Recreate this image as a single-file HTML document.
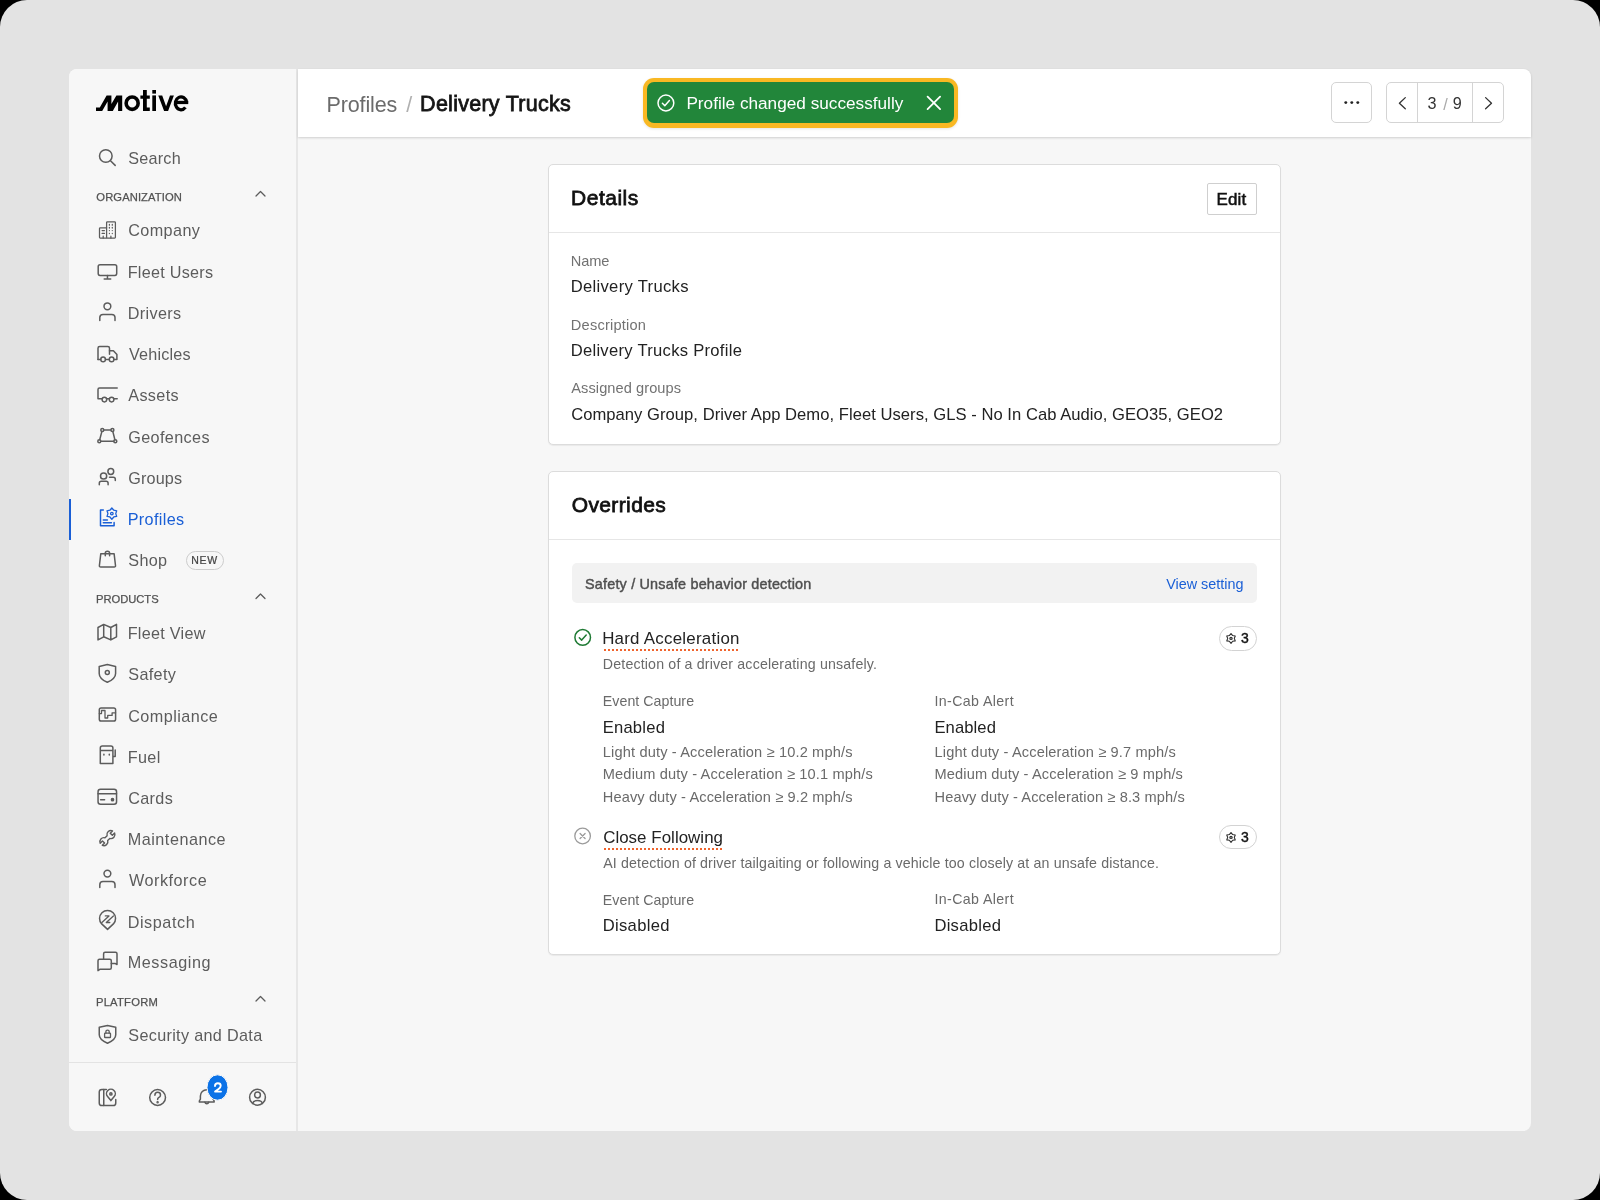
<!DOCTYPE html>
<html><head><meta charset="utf-8">
<style>
html,body{margin:0;padding:0;width:1600px;height:1200px;overflow:hidden;background:#000;}
body{position:relative;font-family:"Liberation Sans",sans-serif;}
.a{position:absolute;box-sizing:border-box;}
.t{position:absolute;white-space:pre;font-family:"Liberation Sans",sans-serif;}
#screen{left:0;top:0;width:1600px;height:1200px;border-radius:27px;background:#e3e3e3;}
#win{left:69px;top:69px;width:1462px;height:1062px;border-radius:8px;background:#f7f7f7;overflow:hidden;}
#side{left:69px;top:69px;width:229px;height:1062px;border-radius:8px 0 0 8px;background:#f7f7f7;border-right:2px solid #e7e7e7;}
#sidediv{left:69px;top:1062px;width:227px;height:1px;background:#e3e3e3;}
#active{left:69px;top:498.5px;width:2px;height:41px;background:#1a5fd6;}
#hdr{left:298px;top:69px;width:1233px;height:68px;background:#fff;border-radius:0 8px 0 0;box-shadow:0 1px 2.5px rgba(0,0,0,0.16);}
#toastO{left:643px;top:78px;width:315px;height:49.5px;border-radius:11px;background:#f9b823;box-shadow:0 1px 3px rgba(0,0,0,0.10);}
#toastI{left:647px;top:82px;width:307px;height:41px;border-radius:7px;background:#22863a;}
.btn{border:1px solid #d4d4d4;border-radius:5px;background:#fff;}
#dots{left:1331px;top:82px;width:41px;height:41px;}
#pager{left:1386px;top:82px;width:118px;height:41px;}
.vdiv{width:1px;background:#d4d4d4;}
.card{background:#fff;border:1px solid #dcdcdc;border-radius:5px;box-shadow:0 1px 1px rgba(0,0,0,0.06);}
#card1{left:548px;top:163.5px;width:733px;height:281px;}
#card2{left:548px;top:470.5px;width:733px;height:484.5px;}
.hdiv{height:1px;background:#e6e6e6;}
#edit{left:1207px;top:183px;width:50px;height:32px;border:1px solid #cfcfcf;border-radius:2px;background:#fff;}
#bar{left:571.5px;top:562.5px;width:685.5px;height:40.5px;border-radius:5px;background:#f2f2f2;}
.pill{border:1px solid #d3d3d3;border-radius:13px;background:#fff;}
#newpill{left:186px;top:550.5px;width:37.5px;height:19.5px;border:1px solid #cdcdcd;border-radius:10px;}
.dotu{height:2px;background-image:linear-gradient(to right,#f0642d 0,#f0642d 2px,transparent 2px);background-size:4px 2px;background-repeat:repeat-x;}
svg{position:absolute;left:0;top:0;overflow:visible;}
</style></head><body>
<div class="a" id="screen"></div>
<div class="a" id="win"></div>
<div class="a" id="side"></div>
<div class="a" id="sidediv"></div>
<div class="a" id="active"></div>
<div class="a" id="hdr"></div>
<div class="a" id="toastO"></div>
<div class="a" id="toastI"></div>
<div class="a btn" id="dots"></div>
<div class="a btn" id="pager"></div>
<div class="a vdiv" style="left:1417px;top:83px;height:39px;"></div>
<div class="a vdiv" style="left:1472px;top:83px;height:39px;"></div>
<div class="a card" id="card1"></div>
<div class="a hdiv" style="left:549px;top:232px;width:731px;"></div>
<div class="a" id="edit"></div>
<div class="a card" id="card2"></div>
<div class="a hdiv" style="left:549px;top:538.5px;width:731px;"></div>
<div class="a" id="bar"></div>
<div class="a pill" style="left:1219px;top:626px;width:38px;height:25px;"></div>
<div class="a pill" style="left:1219px;top:825px;width:38px;height:24px;"></div>
<div class="a" id="newpill"></div>
<div class="a dotu" style="left:604px;top:649px;width:135px;"></div>
<div class="a dotu" style="left:604px;top:847.5px;width:119px;"></div>

<div id="texts" style="position:absolute;left:0;top:0;width:1600px;height:1200px;will-change:transform;">
<div class="t" style="left:128.27px;top:148px;font-size:16.2px;line-height:21px;color:#5c5c5c;font-weight:400;letter-spacing:0.218px;">Search</div>
<div class="t" style="left:128.19px;top:220px;font-size:16.2px;line-height:21px;color:#5c5c5c;font-weight:400;letter-spacing:0.406px;">Company</div>
<div class="t" style="left:127.66px;top:262px;font-size:16.2px;line-height:21px;color:#5c5c5c;font-weight:400;letter-spacing:0.262px;">Fleet Users</div>
<div class="t" style="left:127.66px;top:303px;font-size:16.2px;line-height:21px;color:#5c5c5c;font-weight:400;letter-spacing:0.375px;">Drivers</div>
<div class="t" style="left:128.92px;top:344px;font-size:16.2px;line-height:21px;color:#5c5c5c;font-weight:400;letter-spacing:0.209px;">Vehicles</div>
<div class="t" style="left:128.26px;top:385px;font-size:16.2px;line-height:21px;color:#5c5c5c;font-weight:400;letter-spacing:0.362px;">Assets</div>
<div class="t" style="left:128.19px;top:427px;font-size:16.2px;line-height:21px;color:#5c5c5c;font-weight:400;letter-spacing:0.381px;">Geofences</div>
<div class="t" style="left:128.19px;top:468px;font-size:16.2px;line-height:21px;color:#5c5c5c;font-weight:400;letter-spacing:0.172px;">Groups</div>
<div class="t" style="left:127.66px;top:509px;font-size:16.2px;line-height:21px;color:#1a5fd6;font-weight:400;letter-spacing:0.351px;">Profiles</div>
<div class="t" style="left:128.27px;top:550px;font-size:16.2px;line-height:21px;color:#5c5c5c;font-weight:400;letter-spacing:0.350px;">Shop</div>
<div class="t" style="left:127.66px;top:623px;font-size:16.2px;line-height:21px;color:#5c5c5c;font-weight:400;letter-spacing:0.274px;">Fleet View</div>
<div class="t" style="left:128.27px;top:664px;font-size:16.2px;line-height:21px;color:#5c5c5c;font-weight:400;letter-spacing:0.352px;">Safety</div>
<div class="t" style="left:128.19px;top:706px;font-size:16.2px;line-height:21px;color:#5c5c5c;font-weight:400;letter-spacing:0.468px;">Compliance</div>
<div class="t" style="left:127.66px;top:747px;font-size:16.2px;line-height:21px;color:#5c5c5c;font-weight:400;letter-spacing:0.390px;">Fuel</div>
<div class="t" style="left:128.19px;top:788px;font-size:16.2px;line-height:21px;color:#5c5c5c;font-weight:400;letter-spacing:0.353px;">Cards</div>
<div class="t" style="left:127.66px;top:829px;font-size:16.2px;line-height:21px;color:#5c5c5c;font-weight:400;letter-spacing:0.528px;">Maintenance</div>
<div class="t" style="left:128.92px;top:870px;font-size:16.2px;line-height:21px;color:#5c5c5c;font-weight:400;letter-spacing:0.533px;">Workforce</div>
<div class="t" style="left:127.66px;top:912px;font-size:16.2px;line-height:21px;color:#5c5c5c;font-weight:400;letter-spacing:0.583px;">Dispatch</div>
<div class="t" style="left:127.66px;top:952px;font-size:16.2px;line-height:21px;color:#5c5c5c;font-weight:400;letter-spacing:0.575px;">Messaging</div>
<div class="t" style="left:128.27px;top:1025px;font-size:16.2px;line-height:21px;color:#5c5c5c;font-weight:400;letter-spacing:0.327px;">Security and Data</div>
<div class="t" style="left:96.32px;top:190px;font-size:11.2px;line-height:14px;color:#525252;font-weight:400;letter-spacing:0.112px;-webkit-text-stroke:0.25px #525252;">ORGANIZATION</div>
<div class="t" style="left:95.93px;top:592px;font-size:11.2px;line-height:14px;color:#525252;font-weight:400;letter-spacing:-0.007px;-webkit-text-stroke:0.25px #525252;">PRODUCTS</div>
<div class="t" style="left:95.93px;top:995px;font-size:11.2px;line-height:14px;color:#525252;font-weight:400;letter-spacing:0.258px;-webkit-text-stroke:0.25px #525252;">PLATFORM</div>
<div class="t" style="left:191.23px;top:553px;font-size:10.5px;line-height:14px;color:#444;font-weight:400;letter-spacing:0.746px;-webkit-text-stroke:0.23px #444;">NEW</div>
<div class="t" style="left:326.55px;top:92px;font-size:21.5px;line-height:27px;color:#6b6b6b;font-weight:400;letter-spacing:-0.139px;">Profiles</div>
<div class="t" style="left:406.30px;top:92px;font-size:21.5px;line-height:27px;color:#b0b0b0;font-weight:400;letter-spacing:0.000px;">/</div>
<div class="t" style="left:420.11px;top:91px;font-size:21.5px;line-height:27px;color:#151515;font-weight:400;letter-spacing:0.264px;-webkit-text-stroke:0.77px #151515;">Delivery Trucks</div>
<div class="t" style="left:686.40px;top:92px;font-size:17.2px;line-height:22px;color:#ffffff;font-weight:400;letter-spacing:0.002px;">Profile changed successfully</div>
<div class="t" style="left:1427.39px;top:93px;font-size:16.2px;line-height:21px;color:#333;font-weight:400;letter-spacing:0.000px;">3</div>
<div class="t" style="left:1443.24px;top:94px;font-size:16.2px;line-height:21px;color:#aaa;font-weight:400;letter-spacing:0.000px;">/</div>
<div class="t" style="left:1452.74px;top:93px;font-size:16.2px;line-height:21px;color:#333;font-weight:400;letter-spacing:0.000px;">9</div>
<div class="t" style="left:571.07px;top:184px;font-size:21px;line-height:27px;color:#111;font-weight:400;letter-spacing:0.493px;-webkit-text-stroke:0.76px #111;">Details</div>
<div class="t" style="left:1216.45px;top:189px;font-size:17px;line-height:22px;color:#111;font-weight:400;letter-spacing:0.166px;-webkit-text-stroke:0.51px #111;">Edit</div>
<div class="t" style="left:570.80px;top:252px;font-size:14.6px;line-height:19px;color:#727272;font-weight:400;letter-spacing:-0.123px;">Name</div>
<div class="t" style="left:570.63px;top:276px;font-size:16.6px;line-height:21px;color:#222;font-weight:400;letter-spacing:0.321px;">Delivery Trucks</div>
<div class="t" style="left:570.80px;top:316px;font-size:14.6px;line-height:19px;color:#727272;font-weight:400;letter-spacing:0.212px;">Description</div>
<div class="t" style="left:570.63px;top:340px;font-size:16.6px;line-height:21px;color:#222;font-weight:400;letter-spacing:0.284px;">Delivery Trucks Profile</div>
<div class="t" style="left:571.26px;top:379px;font-size:14.6px;line-height:19px;color:#727272;font-weight:400;letter-spacing:0.077px;">Assigned groups</div>
<div class="t" style="left:571.17px;top:404px;font-size:16.6px;line-height:21px;color:#222;font-weight:400;letter-spacing:0.034px;">Company Group, Driver App Demo, Fleet Users, GLS - No In Cab Audio, GEO35, GEO2</div>
<div class="t" style="left:571.70px;top:491px;font-size:21px;line-height:27px;color:#111;font-weight:400;letter-spacing:0.387px;-webkit-text-stroke:0.76px #111;">Overrides</div>
<div class="t" style="left:585.09px;top:575px;font-size:14.4px;line-height:18px;color:#4f4f4f;font-weight:400;letter-spacing:0.186px;-webkit-text-stroke:0.43px #4f4f4f;">Safety / Unsafe behavior detection</div>
<div class="t" style="left:1166.25px;top:575px;font-size:14.4px;line-height:18px;color:#1a5fd6;font-weight:400;letter-spacing:-0.014px;">View setting</div>
<div class="t" style="left:602.17px;top:628px;font-size:16.9px;line-height:22px;color:#222;font-weight:400;letter-spacing:0.249px;">Hard Acceleration</div>
<div class="t" style="left:602.83px;top:655px;font-size:14.2px;line-height:18px;color:#6a6a6a;font-weight:400;letter-spacing:0.163px;">Detection of a driver accelerating unsafely.</div>
<div class="t" style="left:1240.91px;top:629px;font-size:14px;line-height:18px;color:#111;font-weight:400;letter-spacing:0.000px;-webkit-text-stroke:0.42px #111;">3</div>
<div class="t" style="left:602.83px;top:692px;font-size:14.2px;line-height:18px;color:#6a6a6a;font-weight:400;letter-spacing:0.042px;">Event Capture</div>
<div class="t" style="left:934.51px;top:692px;font-size:14.2px;line-height:18px;color:#6a6a6a;font-weight:400;letter-spacing:0.380px;">In-Cab Alert</div>
<div class="t" style="left:602.63px;top:717px;font-size:16.6px;line-height:21px;color:#222;font-weight:400;letter-spacing:0.241px;">Enabled</div>
<div class="t" style="left:934.39px;top:717px;font-size:16.6px;line-height:21px;color:#222;font-weight:400;letter-spacing:0.107px;">Enabled</div>
<div class="t" style="left:602.80px;top:743px;font-size:14.6px;line-height:19px;color:#6a6a6a;font-weight:400;letter-spacing:0.151px;">Light duty - Acceleration ≥ 10.2 mph/s</div>
<div class="t" style="left:934.56px;top:743px;font-size:14.6px;line-height:19px;color:#6a6a6a;font-weight:400;letter-spacing:0.145px;">Light duty - Acceleration ≥ 9.7 mph/s</div>
<div class="t" style="left:602.80px;top:765px;font-size:14.6px;line-height:19px;color:#6a6a6a;font-weight:400;letter-spacing:0.151px;">Medium duty - Acceleration ≥ 10.1 mph/s</div>
<div class="t" style="left:934.56px;top:765px;font-size:14.6px;line-height:19px;color:#6a6a6a;font-weight:400;letter-spacing:0.123px;">Medium duty - Acceleration ≥ 9 mph/s</div>
<div class="t" style="left:602.80px;top:788px;font-size:14.6px;line-height:19px;color:#6a6a6a;font-weight:400;letter-spacing:0.112px;">Heavy duty - Acceleration ≥ 9.2 mph/s</div>
<div class="t" style="left:934.56px;top:788px;font-size:14.6px;line-height:19px;color:#6a6a6a;font-weight:400;letter-spacing:0.125px;">Heavy duty - Acceleration ≥ 8.3 mph/s</div>
<div class="t" style="left:603.15px;top:827px;font-size:16.9px;line-height:22px;color:#222;font-weight:400;letter-spacing:0.045px;">Close Following</div>
<div class="t" style="left:603.26px;top:854px;font-size:14.2px;line-height:18px;color:#6a6a6a;font-weight:400;letter-spacing:0.136px;">AI detection of driver tailgaiting or following a vehicle too closely at an unsafe distance.</div>
<div class="t" style="left:1240.91px;top:828px;font-size:14px;line-height:18px;color:#111;font-weight:400;letter-spacing:0.000px;-webkit-text-stroke:0.42px #111;">3</div>
<div class="t" style="left:602.83px;top:891px;font-size:14.2px;line-height:18px;color:#6a6a6a;font-weight:400;letter-spacing:0.042px;">Event Capture</div>
<div class="t" style="left:934.51px;top:890px;font-size:14.2px;line-height:18px;color:#6a6a6a;font-weight:400;letter-spacing:0.380px;">In-Cab Alert</div>
<div class="t" style="left:602.63px;top:915px;font-size:16.6px;line-height:21px;color:#222;font-weight:400;letter-spacing:0.333px;">Disabled</div>
<div class="t" style="left:934.39px;top:915px;font-size:16.6px;line-height:21px;color:#222;font-weight:400;letter-spacing:0.285px;">Disabled</div>
</div>

<svg width="1600" height="1200" viewBox="0 0 1600 1200">
<!-- logo -->
<g fill="#000">
<path d="M96 111 L96 107.6 L99.8 107.6 L106.6 95.4 L111.4 95.4 L111.4 104 L116.4 95.4 L122.2 95.4 L122.2 111 L118.1 111 L118.1 101.6 L112.8 111 L107.6 111 L107.6 101.6 L102.2 111 Z"/>
<ellipse cx="132.15" cy="103.2" rx="6" ry="6.2" fill="none" stroke="#000" stroke-width="3.6"/>
<path d="M143 90 H146.8 V95.4 H149.8 V98.8 H146.8 V107.6 H149.8 V111 H143 V98.8 H140.4 V95.4 H143 Z"/>
<rect x="152.3" y="90" width="3.7" height="3.6"/>
<rect x="152.3" y="95.4" width="3.7" height="15.6"/>
<path d="M158.25 95.4 H162.2 L166.1 106.3 L170 95.4 H173.9 L168.1 111 H164.1 Z"/>
<rect x="175" y="100.8" width="13.25" height="3.3"/>
<path d="M186.6 102.4 A5.65 6.45 0 1 0 185.4 107.4" fill="none" stroke="#000" stroke-width="3.3"/>
</g>

<g fill="none" stroke="#5c5c5c" stroke-width="1.5" stroke-linecap="round" stroke-linejoin="round">
<!-- search -->
<circle cx="105.8" cy="156" r="6.3"/>
<path d="M110.5 160.7 L115.2 165.4"/>
<!-- company -->
<g stroke-width="1.25">
<rect x="106.6" y="221.8" width="8.8" height="16.2" rx="0.8"/>
<path d="M106.6 227.8 H100.3 Q99.5 227.8 99.5 228.6 V237.2 Q99.5 238 100.3 238 H106.6"/>
<path d="M102.1 230.5 H104.4 M102.1 233.4 H104.4 M103.2 236.2 V238 M110.9 236.2 V238"/>
<path d="M109.4 224.4 V225.2 M112.3 224.4 V225.2 M109.4 227.3 V228 M112.3 227.3 V228 M109.4 230.5 V230.6 M112.3 230.5 V230.6 M109.4 233.4 V233.5 M112.3 233.4 V233.5"/>
</g>
<!-- monitor -->
<rect x="98.2" y="264.8" width="18.5" height="10.6" rx="1.8"/>
<path d="M107.45 275.4 V279 M104.2 279 H110.7"/>
<!-- drivers -->
<circle cx="107.4" cy="306.3" r="3.4"/>
<path d="M99.8 320.4 V317.6 Q99.8 314.4 103 314.4 H111.8 Q115 314.4 115 317.6 V320.4"/>
<!-- vehicles -->
<path d="M98 359.5 V348.3 Q98 346.6 99.7 346.6 H107.8 Q109.5 346.6 109.5 348.3 V354.2"/>
<path d="M109.5 350.8 H113.4 L116.9 354.6 V359.5 H114.2 M109 359.5 H105.6 M100.6 359.5 H98"/>
<circle cx="103.1" cy="359.4" r="2.3"/>
<circle cx="111.6" cy="359.4" r="2.3"/>
<!-- assets -->
<path d="M117.2 387.9 H99.5 Q98 387.9 98 389.4 V398.8 H101.9 M106.8 398.8 H109.2 M114 398.8 H117.2"/>
<circle cx="104.4" cy="399.6" r="2.3"/>
<circle cx="111.6" cy="399.6" r="2.3"/>
<!-- geofences -->
<path d="M103.8 429.9 H110.9 M112.8 431.4 L114.9 439.8 M113.8 441.3 H100.8 M99.7 439.8 L101.9 431.4"/>
<circle cx="102.3" cy="429.9" r="1.5"/>
<circle cx="112.4" cy="429.9" r="1.5"/>
<circle cx="99.3" cy="441.3" r="1.5"/>
<circle cx="115.3" cy="441.3" r="1.5"/>
<!-- groups -->
<circle cx="110.8" cy="471.5" r="2.9"/>
<path d="M109.5 477.3 H113.3 Q115.3 477.3 115.3 479.3 V480.5"/>
<circle cx="103.6" cy="476" r="3.1"/>
<path d="M99.3 484.8 V483.3 Q99.3 481.3 101.3 481.3 H106.1 Q108.1 481.3 108.1 483.3 V484.8"/>
<!-- profiles (blue) -->
<g stroke="#1a5fd6">
<path d="M103.3 510.1 H100.5 V525.7 H114.1 V522.5"/>
<path d="M103.3 520 H107.4 M103.3 522.8 H111.4"/>
<path d="M111.85 508.00 L113.80 510.22 L116.70 510.80 L115.75 513.60 L116.70 516.40 L113.80 516.98 L111.85 519.20 L109.90 516.98 L107.00 516.40 L107.95 513.60 L107.00 510.80 L109.90 510.22 Z" stroke-width="1.3"/>
<circle cx="111.85" cy="513.6" r="1.3" stroke-width="1.3"/>
</g>
<!-- shop -->
<path d="M100.8 553.7 H114.1 L115.5 565.5 Q115.7 567 114.2 567 H100.7 Q99.2 567 99.4 565.5 Z"/>
<path d="M105.3 555.7 V553 Q105.3 551.2 107.45 551.2 Q109.6 551.2 109.6 553 V555.7"/>
<!-- fleet view -->
<path d="M98 627.5 L103.7 624.4 L110.8 627.5 L116.5 624.4 V636.8 L110.8 639.9 L103.7 636.8 L98 639.9 Z M103.7 624.4 V636.8 M110.8 627.5 V639.9"/>
<!-- safety -->
<path d="M107.3 664.6 L115.6 666.4 V673.4 Q115.6 678.6 107.3 682.3 Q99.2 678.6 99.2 673.4 V666.4 Z"/>
<circle cx="107.3" cy="672.6" r="2"/>
<!-- compliance -->
<rect x="99.3" y="707.9" width="16.3" height="13.2" rx="1.8"/>
<path d="M99.3 713.6 H101.5 V710.5 H105 V718 H107.7 V715.4 H112.1 V712.8 H115.6" stroke-width="1.3"/>
<!-- fuel -->
<path d="M100.3 763.6 V748 Q100.3 746 102.3 746 H110.9 Q112.9 746 112.9 748 V763.6 Z M100.3 750.6 H112.9 M112.9 756.4 H115.2 V750"/>
<path d="M103.9 754.3 V754.9 M109.3 754.3 V754.9"/>
<!-- cards -->
<rect x="98.05" y="789.3" width="18.5" height="14.9" rx="2.5"/>
<path d="M98.05 793.8 H116.5 M100.6 799.7 H104.6"/>
<circle cx="112.5" cy="799.7" r="1.1" fill="#5c5c5c"/>
<!-- maintenance wrench -->
<path transform="translate(107.4 838.1) rotate(-45)" stroke-width="1.4" d="M-1.48 -1.9 L1.48 -1.9 A4 4 0 0 1 8.71 -1.5 L5.5 -1.5 L5.5 1.5 L8.71 1.5 A4 4 0 0 1 1.48 1.9 L-1.48 1.9 A4 4 0 0 1 -8.71 1.5 L-5.5 1.5 L-5.5 -1.5 L-8.71 -1.5 A4 4 0 0 1 -1.48 -1.9 Z"/>
<!-- workforce -->
<circle cx="107.4" cy="873.6" r="3.4"/>
<path d="M99.8 887.4 V884.8 Q99.8 881.6 103 881.6 H111.8 Q115 881.6 115 884.8 V887.4"/>
<!-- dispatch -->
<path d="M101.7 923.9 A8 8 0 1 1 113.4 923.9 L107.55 929.4 Z"/>
<path d="M105.3 915.9 H109 L101.9 922.5 M113.4 915.9 L106.3 922.5 H109.8" stroke-width="1.3"/>
<!-- messaging -->
<path d="M103.6 958.8 V953.7 Q103.6 952.2 105.1 952.2 H115.5 Q117 952.2 117 953.7 V964.5 L115 963.4 H111.3"/>
<path d="M98 970.6 V960.8 Q98 959.3 99.5 959.3 H109.8 Q111.3 959.3 111.3 960.8 V967.7 Q111.3 969.2 109.8 969.2 H100.2 Z"/>
<!-- security -->
<path d="M107.5 1025.6 L115.75 1027.3 V1034.8 Q115.75 1039.8 107.5 1043.25 Q99.25 1039.8 99.25 1034.8 V1027.3 Z"/>
<rect x="104.6" y="1033.2" width="5.9" height="4.3" rx="0.6" stroke-width="1.3"/>
<path d="M105.9 1033.2 V1031.5 Q105.9 1030.1 107.55 1030.1 Q109.2 1030.1 109.2 1031.5 V1033.2" stroke-width="1.3"/>
<!-- chevrons -->
<path d="M256 196 L260.5 191.5 L265 196" stroke-width="1.25"/>
<path d="M256 598.5 L260.5 594 L265 598.5" stroke-width="1.25"/>
<path d="M256 1001 L260.5 996.5 L265 1001" stroke-width="1.25"/>
<!-- bottom icons -->
<path d="M106.4 1089.4 H101.9 Q99.25 1089.4 99.25 1092 V1102.9 Q99.25 1105.5 101.9 1105.5 H113.2 Q115.75 1105.5 115.75 1102.9 V1099.5"/>
<path d="M103.75 1089.4 V1105.5"/>
<path d="M110.9 1100.6 L107.6 1096.6 A4.4 4.4 0 1 1 114.2 1096.6 Z"/>
<circle cx="110.9" cy="1093.9" r="1.1"/>
<circle cx="157.6" cy="1097.5" r="7.9"/>
<path d="M154.9 1095.2 Q154.9 1092.3 157.7 1092.3 Q160.5 1092.3 160.5 1094.9 Q160.5 1096.6 158.6 1097.6 Q157.6 1098.2 157.6 1099.6"/>
<circle cx="157.6" cy="1102.2" r="0.5" fill="#5c5c5c"/>
<path d="M199.3 1102 Q199.2 1100.4 200.4 1099.2 V1096 A6.35 6.35 0 0 1 213.1 1096 V1099.2 Q214.3 1100.4 214.2 1102 Z"/>
<path d="M204.9 1102.3 A2 2 0 0 0 208.7 1102.3"/>
<circle cx="257.5" cy="1097.25" r="7.9"/>
<circle cx="257.5" cy="1095" r="2.9"/>
<path d="M252.6 1103.6 Q253.2 1100.6 257.5 1100.6 Q261.8 1100.6 262.4 1103.6"/>
</g>
<!-- badge -->
<ellipse cx="217.5" cy="1087.5" rx="10.5" ry="12.7" fill="#0b72e7" stroke="#f7f7f7" stroke-width="1"/>
<path d="M215 1086 Q215 1083.2 217.9 1083.2 Q220.7 1083.2 220.7 1085.7 Q220.7 1087.3 218.6 1088.9 L215.1 1091.6 H221" fill="none" stroke="#fff" stroke-width="1.9" stroke-linejoin="round" stroke-linecap="round"/>

<!-- header icons -->
<g fill="#222">
<circle cx="1345.8" cy="102.6" r="1.45"/>
<circle cx="1351.8" cy="102.6" r="1.45"/>
<circle cx="1357.8" cy="102.6" r="1.45"/>
</g>
<g fill="none" stroke="#333" stroke-width="1.3" stroke-linecap="round" stroke-linejoin="round">
<path d="M1405.3 97.6 L1399.4 103.2 L1405.3 108.8"/>
<path d="M1485.6 97.6 L1491.5 103.2 L1485.6 108.8"/>
</g>
<!-- toast icons -->
<g fill="none" stroke="#fff" stroke-width="1.5" stroke-linecap="round" stroke-linejoin="round">
<circle cx="665.9" cy="103" r="7.9"/>
<path d="M662.4 103.3 L664.8 105.7 L669.4 100.6"/>
<path d="M927.6 96.6 L940.1 109.1 M940.1 96.6 L927.6 109.1" stroke-width="1.8"/>
</g>
<!-- override icons -->
<g fill="none" stroke-linecap="round" stroke-linejoin="round" stroke-width="1.5">
<circle cx="582.7" cy="637.4" r="7.8" stroke="#1f7a34"/>
<path d="M579.3 637.7 L581.7 640.1 L586.2 635" stroke="#1f7a34"/>
<circle cx="582.6" cy="836" r="7.8" stroke="#9b9b9b" stroke-width="1.3"/>
<path d="M580.1 833.5 L585.1 838.5 M585.1 833.5 L580.1 838.5" stroke="#9b9b9b" stroke-width="1.3"/>
</g>
<g fill="none" stroke="#333" stroke-width="1.15" stroke-linejoin="round">
<path d="M1231.00 633.50 L1232.65 635.54 L1235.24 635.95 L1234.30 638.40 L1235.24 640.85 L1232.65 641.26 L1231.00 643.30 L1229.35 641.26 L1226.76 640.85 L1227.70 638.40 L1226.76 635.95 L1229.35 635.54 Z"/>
<ellipse cx="1231" cy="638.4" rx="1.2" ry="1.0"/>
<path d="M1231.00 832.50 L1232.65 834.54 L1235.24 834.95 L1234.30 837.40 L1235.24 839.85 L1232.65 840.26 L1231.00 842.30 L1229.35 840.26 L1226.76 839.85 L1227.70 837.40 L1226.76 834.95 L1229.35 834.54 Z"/>
<ellipse cx="1231" cy="837.4" rx="1.2" ry="1.0"/>
</g>
</svg>
</body></html>
